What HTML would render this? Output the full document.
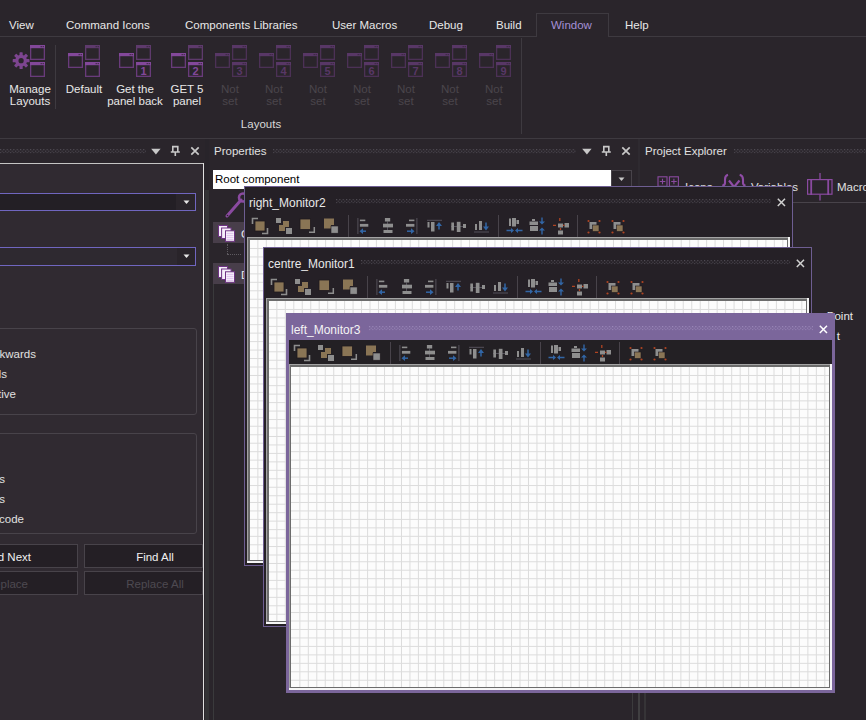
<!DOCTYPE html>
<html><head><meta charset="utf-8"><style>
html,body{margin:0;padding:0;width:866px;height:720px;overflow:hidden;background:#2a252b;}
body{position:relative;font-family:'Liberation Sans', sans-serif;}
.t{position:absolute;white-space:nowrap;font-family:'Liberation Sans', sans-serif;}
</style></head><body>
<div style="position:absolute;left:0px;top:36px;width:866px;height:1px;background:#3e3a40"></div>
<div style="position:absolute;left:536px;top:13px;width:73px;height:24px;border:1px solid #3e3a40;border-bottom:none;background:#2a252b;box-sizing:border-box"></div>
<div class="t" style="left:9px;top:20px;font-size:11.5px;line-height:11.5px;color:#e8e8e8;">View</div>
<div class="t" style="left:66px;top:20px;font-size:11.5px;line-height:11.5px;color:#e8e8e8;">Command Icons</div>
<div class="t" style="left:185px;top:20px;font-size:11.5px;line-height:11.5px;color:#e8e8e8;">Components Libraries</div>
<div class="t" style="left:332px;top:20px;font-size:11.5px;line-height:11.5px;color:#e8e8e8;">User Macros</div>
<div class="t" style="left:429px;top:20px;font-size:11.5px;line-height:11.5px;color:#e8e8e8;">Debug</div>
<div class="t" style="left:496px;top:20px;font-size:11.5px;line-height:11.5px;color:#e8e8e8;">Build</div>
<div class="t" style="left:551px;top:20px;font-size:11.5px;line-height:11.5px;color:#a48fd6;">Window</div>
<div class="t" style="left:625px;top:20px;font-size:11.5px;line-height:11.5px;color:#e8e8e8;">Help</div>
<div style="position:absolute;left:0px;top:138px;width:866px;height:1px;background:#3e3a40"></div>
<div style="position:absolute;left:55px;top:45px;width:1px;height:64px;background:#3e3a40"></div>
<div style="position:absolute;left:521px;top:38px;width:1px;height:96px;background:#3e3a40"></div>
<div class="t" style="left:111px;width:300px;text-align:center;top:119px;font-size:11.5px;line-height:11.5px;color:#d8d8d8;">Layouts</div>
<svg style="position:absolute;left:67.5px;top:53px" width="16" height="16" viewBox="0 0 16 16"><rect x="0.65" y="0.65" width="13.7" height="13.7" fill="none" stroke="#693b7b" stroke-width="1.3"/><rect x="0" y="0" width="15" height="3.2" fill="#83489a"/><rect x="10.6" y="1" width="1.2" height="1.2" fill="#3a2a40"/><rect x="12.6" y="1" width="1.2" height="1.2" fill="#3a2a40"/></svg>
<svg style="position:absolute;left:84.5px;top:45px" width="16" height="16" viewBox="0 0 16 16"><rect x="0.65" y="0.65" width="13.7" height="13.7" fill="none" stroke="#5e3a6c" stroke-width="1.3"/><rect x="0" y="0" width="15" height="3.2" fill="#5e3a6c"/><rect x="10.6" y="1" width="1.2" height="1.2" fill="#3a2a40"/><rect x="12.6" y="1" width="1.2" height="1.2" fill="#3a2a40"/></svg>
<svg style="position:absolute;left:84.5px;top:62px" width="16" height="16" viewBox="0 0 16 16"><rect x="0.65" y="0.65" width="13.7" height="13.7" fill="none" stroke="#693b7b" stroke-width="1.3"/><rect x="0" y="0" width="15" height="3.2" fill="#83489a"/><rect x="10.6" y="1" width="1.2" height="1.2" fill="#3a2a40"/><rect x="12.6" y="1" width="1.2" height="1.2" fill="#3a2a40"/></svg>
<svg style="position:absolute;left:119px;top:53px" width="16" height="16" viewBox="0 0 16 16"><rect x="0.65" y="0.65" width="13.7" height="13.7" fill="none" stroke="#693b7b" stroke-width="1.3"/><rect x="0" y="0" width="15" height="3.2" fill="#83489a"/><rect x="10.6" y="1" width="1.2" height="1.2" fill="#3a2a40"/><rect x="12.6" y="1" width="1.2" height="1.2" fill="#3a2a40"/></svg>
<svg style="position:absolute;left:136px;top:45px" width="16" height="16" viewBox="0 0 16 16"><rect x="0.65" y="0.65" width="13.7" height="13.7" fill="none" stroke="#5e3a6c" stroke-width="1.3"/><rect x="0" y="0" width="15" height="3.2" fill="#5e3a6c"/><rect x="10.6" y="1" width="1.2" height="1.2" fill="#3a2a40"/><rect x="12.6" y="1" width="1.2" height="1.2" fill="#3a2a40"/></svg>
<svg style="position:absolute;left:136px;top:62px" width="16" height="16" viewBox="0 0 16 16"><rect x="0.65" y="0.65" width="13.7" height="13.7" fill="none" stroke="#693b7b" stroke-width="1.3"/><rect x="0" y="0" width="15" height="3.2" fill="#83489a"/><rect x="10.6" y="1" width="1.2" height="1.2" fill="#3a2a40"/><rect x="12.6" y="1" width="1.2" height="1.2" fill="#3a2a40"/><text x="7.6" y="12.6" font-family="Liberation Sans" font-weight="bold" font-size="11" text-anchor="middle" fill="#83489a">1</text></svg>
<svg style="position:absolute;left:171px;top:53px" width="16" height="16" viewBox="0 0 16 16"><rect x="0.65" y="0.65" width="13.7" height="13.7" fill="none" stroke="#693b7b" stroke-width="1.3"/><rect x="0" y="0" width="15" height="3.2" fill="#83489a"/><rect x="10.6" y="1" width="1.2" height="1.2" fill="#3a2a40"/><rect x="12.6" y="1" width="1.2" height="1.2" fill="#3a2a40"/></svg>
<svg style="position:absolute;left:188px;top:45px" width="16" height="16" viewBox="0 0 16 16"><rect x="0.65" y="0.65" width="13.7" height="13.7" fill="none" stroke="#5e3a6c" stroke-width="1.3"/><rect x="0" y="0" width="15" height="3.2" fill="#5e3a6c"/><rect x="10.6" y="1" width="1.2" height="1.2" fill="#3a2a40"/><rect x="12.6" y="1" width="1.2" height="1.2" fill="#3a2a40"/></svg>
<svg style="position:absolute;left:188px;top:62px" width="16" height="16" viewBox="0 0 16 16"><rect x="0.65" y="0.65" width="13.7" height="13.7" fill="none" stroke="#693b7b" stroke-width="1.3"/><rect x="0" y="0" width="15" height="3.2" fill="#83489a"/><rect x="10.6" y="1" width="1.2" height="1.2" fill="#3a2a40"/><rect x="12.6" y="1" width="1.2" height="1.2" fill="#3a2a40"/><text x="7.6" y="12.6" font-family="Liberation Sans" font-weight="bold" font-size="11" text-anchor="middle" fill="#83489a">2</text></svg>
<svg style="position:absolute;left:214.5px;top:53px" width="16" height="16" viewBox="0 0 16 16"><rect x="0.65" y="0.65" width="13.7" height="13.7" fill="none" stroke="#4c3156" stroke-width="1.3"/><rect x="0" y="0" width="15" height="3.2" fill="#583766"/><rect x="10.6" y="1" width="1.2" height="1.2" fill="#3a2a40"/><rect x="12.6" y="1" width="1.2" height="1.2" fill="#3a2a40"/></svg>
<svg style="position:absolute;left:231.5px;top:45px" width="16" height="16" viewBox="0 0 16 16"><rect x="0.65" y="0.65" width="13.7" height="13.7" fill="none" stroke="#4c3156" stroke-width="1.3"/><rect x="0" y="0" width="15" height="3.2" fill="#583766"/><rect x="10.6" y="1" width="1.2" height="1.2" fill="#3a2a40"/><rect x="12.6" y="1" width="1.2" height="1.2" fill="#3a2a40"/></svg>
<svg style="position:absolute;left:231.5px;top:62px" width="16" height="16" viewBox="0 0 16 16"><rect x="0.65" y="0.65" width="13.7" height="13.7" fill="none" stroke="#4c3156" stroke-width="1.3"/><rect x="0" y="0" width="15" height="3.2" fill="#583766"/><rect x="10.6" y="1" width="1.2" height="1.2" fill="#3a2a40"/><rect x="12.6" y="1" width="1.2" height="1.2" fill="#3a2a40"/><text x="7.6" y="12.6" font-family="Liberation Sans" font-weight="bold" font-size="11" text-anchor="middle" fill="#583766">3</text></svg>
<svg style="position:absolute;left:258.5px;top:53px" width="16" height="16" viewBox="0 0 16 16"><rect x="0.65" y="0.65" width="13.7" height="13.7" fill="none" stroke="#4c3156" stroke-width="1.3"/><rect x="0" y="0" width="15" height="3.2" fill="#583766"/><rect x="10.6" y="1" width="1.2" height="1.2" fill="#3a2a40"/><rect x="12.6" y="1" width="1.2" height="1.2" fill="#3a2a40"/></svg>
<svg style="position:absolute;left:275.5px;top:45px" width="16" height="16" viewBox="0 0 16 16"><rect x="0.65" y="0.65" width="13.7" height="13.7" fill="none" stroke="#4c3156" stroke-width="1.3"/><rect x="0" y="0" width="15" height="3.2" fill="#583766"/><rect x="10.6" y="1" width="1.2" height="1.2" fill="#3a2a40"/><rect x="12.6" y="1" width="1.2" height="1.2" fill="#3a2a40"/></svg>
<svg style="position:absolute;left:275.5px;top:62px" width="16" height="16" viewBox="0 0 16 16"><rect x="0.65" y="0.65" width="13.7" height="13.7" fill="none" stroke="#4c3156" stroke-width="1.3"/><rect x="0" y="0" width="15" height="3.2" fill="#583766"/><rect x="10.6" y="1" width="1.2" height="1.2" fill="#3a2a40"/><rect x="12.6" y="1" width="1.2" height="1.2" fill="#3a2a40"/><text x="7.6" y="12.6" font-family="Liberation Sans" font-weight="bold" font-size="11" text-anchor="middle" fill="#583766">4</text></svg>
<svg style="position:absolute;left:302.5px;top:53px" width="16" height="16" viewBox="0 0 16 16"><rect x="0.65" y="0.65" width="13.7" height="13.7" fill="none" stroke="#4c3156" stroke-width="1.3"/><rect x="0" y="0" width="15" height="3.2" fill="#583766"/><rect x="10.6" y="1" width="1.2" height="1.2" fill="#3a2a40"/><rect x="12.6" y="1" width="1.2" height="1.2" fill="#3a2a40"/></svg>
<svg style="position:absolute;left:319.5px;top:45px" width="16" height="16" viewBox="0 0 16 16"><rect x="0.65" y="0.65" width="13.7" height="13.7" fill="none" stroke="#4c3156" stroke-width="1.3"/><rect x="0" y="0" width="15" height="3.2" fill="#583766"/><rect x="10.6" y="1" width="1.2" height="1.2" fill="#3a2a40"/><rect x="12.6" y="1" width="1.2" height="1.2" fill="#3a2a40"/></svg>
<svg style="position:absolute;left:319.5px;top:62px" width="16" height="16" viewBox="0 0 16 16"><rect x="0.65" y="0.65" width="13.7" height="13.7" fill="none" stroke="#4c3156" stroke-width="1.3"/><rect x="0" y="0" width="15" height="3.2" fill="#583766"/><rect x="10.6" y="1" width="1.2" height="1.2" fill="#3a2a40"/><rect x="12.6" y="1" width="1.2" height="1.2" fill="#3a2a40"/><text x="7.6" y="12.6" font-family="Liberation Sans" font-weight="bold" font-size="11" text-anchor="middle" fill="#583766">5</text></svg>
<svg style="position:absolute;left:346.5px;top:53px" width="16" height="16" viewBox="0 0 16 16"><rect x="0.65" y="0.65" width="13.7" height="13.7" fill="none" stroke="#4c3156" stroke-width="1.3"/><rect x="0" y="0" width="15" height="3.2" fill="#583766"/><rect x="10.6" y="1" width="1.2" height="1.2" fill="#3a2a40"/><rect x="12.6" y="1" width="1.2" height="1.2" fill="#3a2a40"/></svg>
<svg style="position:absolute;left:363.5px;top:45px" width="16" height="16" viewBox="0 0 16 16"><rect x="0.65" y="0.65" width="13.7" height="13.7" fill="none" stroke="#4c3156" stroke-width="1.3"/><rect x="0" y="0" width="15" height="3.2" fill="#583766"/><rect x="10.6" y="1" width="1.2" height="1.2" fill="#3a2a40"/><rect x="12.6" y="1" width="1.2" height="1.2" fill="#3a2a40"/></svg>
<svg style="position:absolute;left:363.5px;top:62px" width="16" height="16" viewBox="0 0 16 16"><rect x="0.65" y="0.65" width="13.7" height="13.7" fill="none" stroke="#4c3156" stroke-width="1.3"/><rect x="0" y="0" width="15" height="3.2" fill="#583766"/><rect x="10.6" y="1" width="1.2" height="1.2" fill="#3a2a40"/><rect x="12.6" y="1" width="1.2" height="1.2" fill="#3a2a40"/><text x="7.6" y="12.6" font-family="Liberation Sans" font-weight="bold" font-size="11" text-anchor="middle" fill="#583766">6</text></svg>
<svg style="position:absolute;left:390.5px;top:53px" width="16" height="16" viewBox="0 0 16 16"><rect x="0.65" y="0.65" width="13.7" height="13.7" fill="none" stroke="#4c3156" stroke-width="1.3"/><rect x="0" y="0" width="15" height="3.2" fill="#583766"/><rect x="10.6" y="1" width="1.2" height="1.2" fill="#3a2a40"/><rect x="12.6" y="1" width="1.2" height="1.2" fill="#3a2a40"/></svg>
<svg style="position:absolute;left:407.5px;top:45px" width="16" height="16" viewBox="0 0 16 16"><rect x="0.65" y="0.65" width="13.7" height="13.7" fill="none" stroke="#4c3156" stroke-width="1.3"/><rect x="0" y="0" width="15" height="3.2" fill="#583766"/><rect x="10.6" y="1" width="1.2" height="1.2" fill="#3a2a40"/><rect x="12.6" y="1" width="1.2" height="1.2" fill="#3a2a40"/></svg>
<svg style="position:absolute;left:407.5px;top:62px" width="16" height="16" viewBox="0 0 16 16"><rect x="0.65" y="0.65" width="13.7" height="13.7" fill="none" stroke="#4c3156" stroke-width="1.3"/><rect x="0" y="0" width="15" height="3.2" fill="#583766"/><rect x="10.6" y="1" width="1.2" height="1.2" fill="#3a2a40"/><rect x="12.6" y="1" width="1.2" height="1.2" fill="#3a2a40"/><text x="7.6" y="12.6" font-family="Liberation Sans" font-weight="bold" font-size="11" text-anchor="middle" fill="#583766">7</text></svg>
<svg style="position:absolute;left:434.5px;top:53px" width="16" height="16" viewBox="0 0 16 16"><rect x="0.65" y="0.65" width="13.7" height="13.7" fill="none" stroke="#4c3156" stroke-width="1.3"/><rect x="0" y="0" width="15" height="3.2" fill="#583766"/><rect x="10.6" y="1" width="1.2" height="1.2" fill="#3a2a40"/><rect x="12.6" y="1" width="1.2" height="1.2" fill="#3a2a40"/></svg>
<svg style="position:absolute;left:451.5px;top:45px" width="16" height="16" viewBox="0 0 16 16"><rect x="0.65" y="0.65" width="13.7" height="13.7" fill="none" stroke="#4c3156" stroke-width="1.3"/><rect x="0" y="0" width="15" height="3.2" fill="#583766"/><rect x="10.6" y="1" width="1.2" height="1.2" fill="#3a2a40"/><rect x="12.6" y="1" width="1.2" height="1.2" fill="#3a2a40"/></svg>
<svg style="position:absolute;left:451.5px;top:62px" width="16" height="16" viewBox="0 0 16 16"><rect x="0.65" y="0.65" width="13.7" height="13.7" fill="none" stroke="#4c3156" stroke-width="1.3"/><rect x="0" y="0" width="15" height="3.2" fill="#583766"/><rect x="10.6" y="1" width="1.2" height="1.2" fill="#3a2a40"/><rect x="12.6" y="1" width="1.2" height="1.2" fill="#3a2a40"/><text x="7.6" y="12.6" font-family="Liberation Sans" font-weight="bold" font-size="11" text-anchor="middle" fill="#583766">8</text></svg>
<svg style="position:absolute;left:478.5px;top:53px" width="16" height="16" viewBox="0 0 16 16"><rect x="0.65" y="0.65" width="13.7" height="13.7" fill="none" stroke="#4c3156" stroke-width="1.3"/><rect x="0" y="0" width="15" height="3.2" fill="#583766"/><rect x="10.6" y="1" width="1.2" height="1.2" fill="#3a2a40"/><rect x="12.6" y="1" width="1.2" height="1.2" fill="#3a2a40"/></svg>
<svg style="position:absolute;left:495.5px;top:45px" width="16" height="16" viewBox="0 0 16 16"><rect x="0.65" y="0.65" width="13.7" height="13.7" fill="none" stroke="#4c3156" stroke-width="1.3"/><rect x="0" y="0" width="15" height="3.2" fill="#583766"/><rect x="10.6" y="1" width="1.2" height="1.2" fill="#3a2a40"/><rect x="12.6" y="1" width="1.2" height="1.2" fill="#3a2a40"/></svg>
<svg style="position:absolute;left:495.5px;top:62px" width="16" height="16" viewBox="0 0 16 16"><rect x="0.65" y="0.65" width="13.7" height="13.7" fill="none" stroke="#4c3156" stroke-width="1.3"/><rect x="0" y="0" width="15" height="3.2" fill="#583766"/><rect x="10.6" y="1" width="1.2" height="1.2" fill="#3a2a40"/><rect x="12.6" y="1" width="1.2" height="1.2" fill="#3a2a40"/><text x="7.6" y="12.6" font-family="Liberation Sans" font-weight="bold" font-size="11" text-anchor="middle" fill="#583766">9</text></svg>
<svg style="position:absolute;left:11px;top:51px" width="21" height="21" viewBox="0 0 21 21"><g fill="#7d4590" transform="translate(10.1 9.7)"><rect x="-1.6" y="-8.4" width="3.2" height="4" rx="0.6" transform="rotate(0)"/><rect x="-1.6" y="-8.4" width="3.2" height="4" rx="0.6" transform="rotate(45)"/><rect x="-1.6" y="-8.4" width="3.2" height="4" rx="0.6" transform="rotate(90)"/><rect x="-1.6" y="-8.4" width="3.2" height="4" rx="0.6" transform="rotate(135)"/><rect x="-1.6" y="-8.4" width="3.2" height="4" rx="0.6" transform="rotate(180)"/><rect x="-1.6" y="-8.4" width="3.2" height="4" rx="0.6" transform="rotate(225)"/><rect x="-1.6" y="-8.4" width="3.2" height="4" rx="0.6" transform="rotate(270)"/><rect x="-1.6" y="-8.4" width="3.2" height="4" rx="0.6" transform="rotate(315)"/><circle r="5.9"/></g><circle cx="10.1" cy="9.7" r="2.6" fill="#2a252b"/></svg>
<svg style="position:absolute;left:30.3px;top:45px" width="16" height="16" viewBox="0 0 16 16"><rect x="0.65" y="0.65" width="13.7" height="13.7" fill="none" stroke="#693b7b" stroke-width="1.3"/><rect x="0" y="0" width="15" height="3.2" fill="#83489a"/><rect x="10.6" y="1" width="1.2" height="1.2" fill="#3a2a40"/><rect x="12.6" y="1" width="1.2" height="1.2" fill="#3a2a40"/></svg>
<svg style="position:absolute;left:30.3px;top:62px" width="16" height="16" viewBox="0 0 16 16"><rect x="0.65" y="0.65" width="13.7" height="13.7" fill="none" stroke="#693b7b" stroke-width="1.3"/><rect x="0" y="0" width="15" height="3.2" fill="#83489a"/><rect x="10.6" y="1" width="1.2" height="1.2" fill="#3a2a40"/><rect x="12.6" y="1" width="1.2" height="1.2" fill="#3a2a40"/></svg>
<div class="t" style="left:-120px;width:300px;text-align:center;top:84px;font-size:11.5px;line-height:11.5px;color:#e8e8e8;">Manage</div>
<div class="t" style="left:-120px;width:300px;text-align:center;top:96px;font-size:11.5px;line-height:11.5px;color:#e8e8e8;">Layouts</div>
<div class="t" style="left:-66px;width:300px;text-align:center;top:84px;font-size:11.5px;line-height:11.5px;color:#e8e8e8;">Default</div>
<div class="t" style="left:-15px;width:300px;text-align:center;top:84px;font-size:11.5px;line-height:11.5px;color:#e8e8e8;">Get the</div>
<div class="t" style="left:-15px;width:300px;text-align:center;top:96px;font-size:11.5px;line-height:11.5px;color:#e8e8e8;">panel back</div>
<div class="t" style="left:37px;width:300px;text-align:center;top:84px;font-size:11.5px;line-height:11.5px;color:#e8e8e8;">GET 5</div>
<div class="t" style="left:37px;width:300px;text-align:center;top:96px;font-size:11.5px;line-height:11.5px;color:#e8e8e8;">panel</div>
<div class="t" style="left:80px;width:300px;text-align:center;top:84px;font-size:11.5px;line-height:11.5px;color:#4a464c;">Not</div>
<div class="t" style="left:80px;width:300px;text-align:center;top:96px;font-size:11.5px;line-height:11.5px;color:#4a464c;">set</div>
<div class="t" style="left:124px;width:300px;text-align:center;top:84px;font-size:11.5px;line-height:11.5px;color:#4a464c;">Not</div>
<div class="t" style="left:124px;width:300px;text-align:center;top:96px;font-size:11.5px;line-height:11.5px;color:#4a464c;">set</div>
<div class="t" style="left:168px;width:300px;text-align:center;top:84px;font-size:11.5px;line-height:11.5px;color:#4a464c;">Not</div>
<div class="t" style="left:168px;width:300px;text-align:center;top:96px;font-size:11.5px;line-height:11.5px;color:#4a464c;">set</div>
<div class="t" style="left:212px;width:300px;text-align:center;top:84px;font-size:11.5px;line-height:11.5px;color:#4a464c;">Not</div>
<div class="t" style="left:212px;width:300px;text-align:center;top:96px;font-size:11.5px;line-height:11.5px;color:#4a464c;">set</div>
<div class="t" style="left:256px;width:300px;text-align:center;top:84px;font-size:11.5px;line-height:11.5px;color:#4a464c;">Not</div>
<div class="t" style="left:256px;width:300px;text-align:center;top:96px;font-size:11.5px;line-height:11.5px;color:#4a464c;">set</div>
<div class="t" style="left:300px;width:300px;text-align:center;top:84px;font-size:11.5px;line-height:11.5px;color:#4a464c;">Not</div>
<div class="t" style="left:300px;width:300px;text-align:center;top:96px;font-size:11.5px;line-height:11.5px;color:#4a464c;">set</div>
<div class="t" style="left:344px;width:300px;text-align:center;top:84px;font-size:11.5px;line-height:11.5px;color:#4a464c;">Not</div>
<div class="t" style="left:344px;width:300px;text-align:center;top:96px;font-size:11.5px;line-height:11.5px;color:#4a464c;">set</div>
<svg style="position:absolute;left:0px;top:149px" width="146" height="5"><defs><pattern id="dp0_149" width="3.33" height="3.33" patternUnits="userSpaceOnUse"><rect x="0" y="0" width="1.1" height="1.1" fill="#55515a"/><rect x="1.67" y="1.67" width="1.1" height="1.1" fill="#55515a"/></pattern></defs><rect x="0" y="0" width="146" height="4.2" fill="url(#dp0_149)"/></svg>
<svg style="position:absolute;left:150px;top:145px" width="52" height="13" viewBox="0 0 52 13"><path d="M1.2 3.8 L10.6 3.8 L5.9 9.6 Z" fill="#c8c8c8"/><path d="M22 1.6 H28.6 M22.8 1.6 V7 M27.8 1.6 V7 M20.8 7 H29.8 M25.3 7 V11" stroke="#c8c8c8" stroke-width="1.6" fill="none"/><path d="M41.3 2.3 L48.7 9.6 M48.7 2.3 L41.3 9.6" stroke="#c8c8c8" stroke-width="1.7" fill="none"/></svg>
<div style="position:absolute;left:0px;top:163px;width:204px;height:557px;background:#302a31"></div>
<div style="position:absolute;left:0px;top:163px;width:204px;height:1px;background:#c4c4c4"></div>
<div style="position:absolute;left:203px;top:163px;width:1px;height:557px;background:#e0e0e0"></div>
<div style="position:absolute;left:205px;top:139px;width:4px;height:581px;background:#28242a"></div>
<div style="position:absolute;left:205px;top:190px;width:4px;height:530px;background:#333235"></div>
<div style="position:absolute;left:213px;top:284px;width:1px;height:436px;background:#3a3a3c"></div>
<div style="position:absolute;left:-5px;top:193px;width:201px;height:18px;background:#231f25;border:1px solid #7066c0;box-sizing:border-box"></div>
<div style="position:absolute;left:176px;top:194px;width:19px;height:16px;background:#2a252b"></div>
<div style="position:absolute;left:-5px;top:247px;width:201px;height:19px;background:#2e2930;border:1px solid #7066c0;box-sizing:border-box"></div>
<div style="position:absolute;left:177px;top:248px;width:18px;height:17px;background:#29242a"></div>
<svg style="position:absolute;left:183px;top:200px" width="8" height="5"><path d="M0.5 0.5 H6.5 L3.5 4 Z" fill="#e8e8e8"/></svg>
<svg style="position:absolute;left:183px;top:254px" width="8" height="5"><path d="M0.5 0.5 H6.5 L3.5 4 Z" fill="#e8e8e8"/></svg>
<div style="position:absolute;left:-5px;top:328px;width:202px;height:87px;border:1px solid #48434a;border-radius:3px;box-sizing:border-box"></div>
<div style="position:absolute;left:-5px;top:433px;width:202px;height:101px;border:1px solid #48434a;border-radius:3px;box-sizing:border-box"></div>
<div class="t" style="left:-264px;width:300px;text-align:right;top:349px;font-size:11.5px;line-height:11.5px;color:#e0e0e0;">Backwards</div>
<div class="t" style="left:-293px;width:300px;text-align:right;top:369px;font-size:11.5px;line-height:11.5px;color:#e0e0e0;">Fields</div>
<div class="t" style="left:-284px;width:300px;text-align:right;top:389px;font-size:11.5px;line-height:11.5px;color:#e0e0e0;">sensitive</div>
<div class="t" style="left:-295px;width:300px;text-align:right;top:474px;font-size:11.5px;line-height:11.5px;color:#e0e0e0;">comments</div>
<div class="t" style="left:-295px;width:300px;text-align:right;top:494px;font-size:11.5px;line-height:11.5px;color:#e0e0e0;">strings</div>
<div class="t" style="left:-276px;width:300px;text-align:right;top:514px;font-size:11.5px;line-height:11.5px;color:#e0e0e0;">in code</div>
<div style="position:absolute;left:-5px;top:544px;width:83px;height:24px;background:#241f25;border:1px solid #48434a;box-sizing:border-box"></div>
<div style="position:absolute;left:84px;top:544px;width:119px;height:24px;background:#241f25;border:1px solid #48434a;box-sizing:border-box"></div>
<div style="position:absolute;left:-5px;top:571px;width:83px;height:24px;background:#241f25;border:1px solid #48434a;box-sizing:border-box"></div>
<div style="position:absolute;left:84px;top:571px;width:119px;height:24px;background:#241f25;border:1px solid #48434a;box-sizing:border-box"></div>
<div class="t" style="left:-269px;width:300px;text-align:right;top:552px;font-size:11.5px;line-height:11.5px;color:#f0f0f0;">Find Next</div>
<div class="t" style="left:5px;width:300px;text-align:center;top:552px;font-size:11.5px;line-height:11.5px;color:#f0f0f0;">Find All</div>
<div class="t" style="left:-272px;width:300px;text-align:right;top:579px;font-size:11.5px;line-height:11.5px;color:#4e4a51;">Replace</div>
<div class="t" style="left:5px;width:300px;text-align:center;top:579px;font-size:11.5px;line-height:11.5px;color:#4e4a51;">Replace All</div>
<div style="position:absolute;left:203px;top:163px;width:1px;height:557px;background:#e0e0e0"></div>
<div class="t" style="left:214px;top:146px;font-size:11.5px;line-height:11.5px;color:#e0e0e0;">Properties</div>
<svg style="position:absolute;left:273px;top:149px" width="303" height="5"><defs><pattern id="dp273_149" width="3.33" height="3.33" patternUnits="userSpaceOnUse"><rect x="0" y="0" width="1.1" height="1.1" fill="#55515a"/><rect x="1.67" y="1.67" width="1.1" height="1.1" fill="#55515a"/></pattern></defs><rect x="0" y="0" width="303" height="4.2" fill="url(#dp273_149)"/></svg>
<svg style="position:absolute;left:581px;top:145px" width="52" height="13" viewBox="0 0 52 13"><path d="M1.2 3.8 L10.6 3.8 L5.9 9.6 Z" fill="#c8c8c8"/><path d="M22 1.6 H28.6 M22.8 1.6 V7 M27.8 1.6 V7 M20.8 7 H29.8 M25.3 7 V11" stroke="#c8c8c8" stroke-width="1.6" fill="none"/><path d="M41.3 2.3 L48.7 9.6 M48.7 2.3 L41.3 9.6" stroke="#c8c8c8" stroke-width="1.7" fill="none"/></svg>
<div style="position:absolute;left:213px;top:170px;width:398px;height:19px;background:#ffffff"></div>
<div class="t" style="left:215px;top:174px;font-size:11.5px;line-height:11.5px;color:#000000;">Root component</div>
<div style="position:absolute;left:611px;top:170px;width:21px;height:19px;background:#2a252b;border:1px solid #48434a;box-sizing:border-box"></div>
<svg style="position:absolute;left:618px;top:177px" width="8" height="5"><path d="M0.5 0.5 H6.5 L3.5 4 Z" fill="#c8c8c8"/></svg>
<svg style="position:absolute;left:222px;top:190px" width="24" height="30" viewBox="0 0 24 30"><path d="M5 26 L19 10" stroke="#8a4aa0" stroke-width="3" stroke-linecap="round"/><circle cx="21" cy="7.5" r="4" fill="none" stroke="#8a4aa0" stroke-width="2.6"/><circle cx="5.5" cy="25.5" r="0.8" fill="#2a252b"/></svg>
<div style="position:absolute;left:213px;top:222px;width:40px;height:21px;background:#483e4a"></div>
<div style="position:absolute;left:213px;top:263px;width:40px;height:21px;background:#483e4a"></div>
<svg style="position:absolute;left:217px;top:224px" width="19" height="19" viewBox="0 0 19 19"><rect x="1.5" y="1.5" width="9" height="11" fill="#f6eefa" stroke="#6e3284"/><rect x="4.6" y="4" width="9.5" height="10.5" fill="#f6eefa" stroke="#6e3284"/><rect x="8.5" y="6.8" width="9" height="10.5" fill="#fbf6fd" stroke="#6e3284"/><path d="M9.5 9.3h7M9.5 11.3h7M9.5 13.3h7M9.5 15.3h7" stroke="#dcbceb" stroke-width="1"/></svg>
<div class="t" style="left:241px;top:229px;font-size:11.5px;line-height:11.5px;color:#e8e8e8;">Components</div>
<div class="t" style="left:241px;top:270px;font-size:11.5px;line-height:11.5px;color:#e8e8e8;">Displays</div>
<svg style="position:absolute;left:217px;top:265px" width="19" height="19" viewBox="0 0 19 19"><rect x="1.5" y="1.5" width="9" height="11" fill="#f6eefa" stroke="#6e3284"/><rect x="4.6" y="4" width="9.5" height="10.5" fill="#f6eefa" stroke="#6e3284"/><rect x="8.5" y="6.8" width="9" height="10.5" fill="#fbf6fd" stroke="#6e3284"/><path d="M9.5 9.3h7M9.5 11.3h7M9.5 13.3h7M9.5 15.3h7" stroke="#dcbceb" stroke-width="1"/></svg>
<div style="position:absolute;left:227px;top:244px;width:1px;height:10px;border-left:1px dotted #5e5a60"></div>
<div style="position:absolute;left:227px;top:254px;width:14px;height:1px;border-top:1px dotted #5e5a60"></div>
<div class="t" style="left:645px;top:146px;font-size:11.5px;line-height:11.5px;color:#e0e0e0;">Project Explorer</div>
<svg style="position:absolute;left:734px;top:149px" width="132" height="5"><defs><pattern id="dp734_149" width="3.33" height="3.33" patternUnits="userSpaceOnUse"><rect x="0" y="0" width="1.1" height="1.1" fill="#55515a"/><rect x="1.67" y="1.67" width="1.1" height="1.1" fill="#55515a"/></pattern></defs><rect x="0" y="0" width="132" height="4.2" fill="url(#dp734_149)"/></svg>
<div style="position:absolute;left:792px;top:202px;width:74px;height:1px;background:#48434a"></div>
<div class="t" style="left:685px;top:182px;font-size:11.5px;line-height:11.5px;color:#e0e0e0;">Icons</div>
<div class="t" style="left:751px;top:182px;font-size:11.5px;line-height:11.5px;color:#e0e0e0;">Variables</div>
<div class="t" style="left:837px;top:182px;font-size:11.5px;line-height:11.5px;color:#e0e0e0;">Macros</div>
<svg style="position:absolute;left:656px;top:175px" width="24" height="13"><g fill="none" stroke="#8a4aa0" stroke-width="1.1"><rect x="2" y="1.8" width="9" height="9.5"/><rect x="13.4" y="1.8" width="9" height="9.5"/><path d="M6.5 3.8v5.5M3.8 6.5h5.5M17.9 3.8v5.5M15.2 6.5h5.5"/></g></svg>
<svg style="position:absolute;left:720px;top:172px" width="28" height="20"><g fill="none" stroke="#8f4ca6" stroke-width="2.1"><path d="M8 2.8 C5.5 3.5 5 5 5 7.5 V11 C5 12.5 4 13.3 2.3 13.7"/><path d="M9 8.5 L14 15 L19.5 8.5"/><path d="M19.7 2.8 C22.2 3.5 23 5 23 7.5 V11 C23 12.5 24 13.3 25.5 13.7"/></g></svg>
<svg style="position:absolute;left:806px;top:172px" width="28" height="30"><g stroke="#8a4aa0" fill="none"><rect x="1.6" y="7.6" width="24.4" height="14.6" stroke-width="1.2"/><path d="M5.2 7v16M22.2 7v16" stroke-width="1.8"/><path d="M14 1v6.5M14 22.5v6" stroke-width="1.3"/></g></svg>
<div class="t" style="left:553px;width:300px;text-align:right;top:311px;font-size:11.5px;line-height:11.5px;color:#e8e8e8;">Point</div>
<div class="t" style="left:540px;width:300px;text-align:right;top:331px;font-size:11.5px;line-height:11.5px;color:#e8e8e8;">t</div>
<div style="position:absolute;left:638px;top:139px;width:2px;height:51px;background:#2e2a30"></div>
<div style="position:absolute;left:632px;top:284px;width:1px;height:436px;background:#3c3b3d"></div>
<div style="position:absolute;left:638px;top:190px;width:2px;height:530px;background:#403f41"></div>
<div style="position:absolute;left:644px;top:190px;width:2px;height:530px;background:#363437"></div>
<div style="position:absolute;left:244px;top:186px;width:549px;height:380px;background:#252026;border:1px solid #6e5e92;box-sizing:border-box"></div>
<div class="t" style="left:249px;top:197px;font-size:12px;line-height:12px;color:#e8e8e8;">right_Monitor2</div>
<svg style="position:absolute;left:336px;top:199px" width="435" height="5"><defs><pattern id="dp336_199" width="3.33" height="3.33" patternUnits="userSpaceOnUse"><rect x="0" y="0" width="1.1" height="1.1" fill="#55515a"/><rect x="1.67" y="1.67" width="1.1" height="1.1" fill="#55515a"/></pattern></defs><rect x="0" y="0" width="435" height="4.2" fill="url(#dp336_199)"/></svg>
<svg style="position:absolute;left:776px;top:197px" width="11" height="11"><path d="M1.8 1.8 L9 9 M9 1.8 L1.8 9" stroke="#d0d0d0" stroke-width="1.5"/></svg>
<svg style="position:absolute;left:251px;top:217px" width="18" height="18" viewBox="0 0 18 18"><path d="M1.5 7 V1.5 H7" stroke="#8e8e8e" stroke-width="1.6" fill="none"/><rect x="4" y="4" width="10" height="10" fill="#8a7555" stroke="#1e1a1e" stroke-width="0.8"/><path d="M16.5 11 V16.5 H11" stroke="#8e8e8e" stroke-width="1.6" fill="none"/></svg><svg style="position:absolute;left:275px;top:217px" width="18" height="18" viewBox="0 0 18 18"><rect x="1" y="1" width="5" height="5" fill="#8e8e8e"/><rect x="8" y="4" width="6" height="6" fill="#8a7555"/><rect x="4" y="8" width="6" height="6" fill="#8a7555"/><rect x="11" y="11" width="6" height="6" fill="#8e8e8e"/></svg><svg style="position:absolute;left:299px;top:217px" width="18" height="18" viewBox="0 0 18 18"><rect x="1" y="2" width="10.5" height="10.5" fill="#8a7555" stroke="#1e1a1e" stroke-width="0.8"/><path d="M15.3 10 V15.3 H10" stroke="#8e8e8e" stroke-width="1.5" fill="none"/></svg><svg style="position:absolute;left:323px;top:217px" width="18" height="18" viewBox="0 0 18 18"><path d="M1 1.5 H11 V8 H8 V11.5 H1 Z" fill="#8a7555"/><rect x="8" y="9" width="7.2" height="7.2" fill="#8e8e8e" stroke="#1e1a1e" stroke-width="0.6"/></svg><div style="position:absolute;left:348px;top:215px;width:1px;height:22px;background:#48434a"></div><svg style="position:absolute;left:356px;top:217px" width="18" height="18" viewBox="0 0 18 18"><path d="M1.9 1 V17" stroke="#54515a" stroke-width="1"/><rect x="3.9" y="2.6" width="5.4" height="1.6" fill="#8e8e8e"/><rect x="3.9" y="6.9" width="8.4" height="2.8" fill="#8e8e8e"/><path d="M3.5 14.2 L7 11.3 L7 17 Z" fill="#3266a6"/><path d="M6 14.2 H10" stroke="#3266a6" stroke-width="1.5"/></svg><svg style="position:absolute;left:381px;top:217px" width="18" height="18" viewBox="0 0 18 18"><path d="M6.5 4.5 V13" stroke="#54515a" stroke-width="1"/><rect x="3.9" y="1" width="5.3" height="3.5" fill="#8e8e8e"/><rect x="2" y="6.7" width="10" height="3.7" fill="#8e8e8e"/><rect x="2.5" y="13" width="9" height="3" fill="#8e8e8e"/></svg><svg style="position:absolute;left:404px;top:217px" width="18" height="18" viewBox="0 0 18 18"><path d="M12.9 1 V17" stroke="#54515a" stroke-width="1"/><rect x="5" y="2.6" width="5.4" height="1.6" fill="#8e8e8e"/><rect x="2" y="6.9" width="8.4" height="2.8" fill="#8e8e8e"/><path d="M10.5 14.2 L7 11.3 L7 17 Z" fill="#3266a6"/><path d="M3 14.2 H8" stroke="#3266a6" stroke-width="1.5"/></svg><svg style="position:absolute;left:427px;top:217px" width="18" height="18" viewBox="0 0 18 18"><path d="M0 3.3 H15" stroke="#54515a" stroke-width="1"/><rect x="0.5" y="5" width="2" height="5.5" fill="#8e8e8e"/><rect x="4" y="5" width="3.5" height="9.5" fill="#8e8e8e"/><path d="M9 9 L12 5 L15 9 Z" fill="#3266a6"/><path d="M12 8 V12.5" stroke="#3266a6" stroke-width="1.5"/></svg><svg style="position:absolute;left:450px;top:217px" width="18" height="18" viewBox="0 0 18 18"><path d="M1 9.5 H16" stroke="#54515a" stroke-width="1"/><rect x="1.3" y="5.5" width="2.7" height="8" fill="#8e8e8e"/><rect x="6.8" y="4.8" width="3.7" height="10.2" fill="#8e8e8e"/><rect x="13" y="7" width="3" height="4" fill="#8e8e8e"/></svg><svg style="position:absolute;left:473px;top:217px" width="18" height="18" viewBox="0 0 18 18"><path d="M1 15 H16" stroke="#54515a" stroke-width="1"/><rect x="2" y="7" width="2" height="6" fill="#8e8e8e"/><rect x="6" y="4" width="3" height="9" fill="#8e8e8e"/><path d="M13 5.5 V10" stroke="#3266a6" stroke-width="1.5"/><path d="M10 9.5 L13 13.5 L16 9.5 Z" fill="#3266a6"/></svg><div style="position:absolute;left:498px;top:215px;width:1px;height:22px;background:#48434a"></div><svg style="position:absolute;left:506px;top:217px" width="18" height="18" viewBox="0 0 18 18"><rect x="3" y="1.5" width="2" height="7.5" fill="#8e8e8e"/><rect x="6" y="1" width="4" height="8.5" fill="#8e8e8e"/><rect x="10.5" y="3" width="2.5" height="4" fill="#8e8e8e"/><path d="M0.5 13.5 H5.5 M16.5 13.5 H11.5" stroke="#3266a6" stroke-width="1.4"/><path d="M5 11 L8 13.5 L5 16 Z M12 11 L9 13.5 L12 16 Z" fill="#3266a6"/></svg><svg style="position:absolute;left:529px;top:217px" width="18" height="18" viewBox="0 0 18 18"><rect x="3" y="2" width="3" height="2" fill="#8e8e8e"/><rect x="0.5" y="4.5" width="8.5" height="3.5" fill="#8e8e8e"/><rect x="1" y="9" width="8" height="5" fill="#8e8e8e"/><path d="M13 0.5 V5 M13 17.5 V13" stroke="#3266a6" stroke-width="1.4"/><path d="M10 4.5 L13 7.5 L16 4.5 Z M10 13.5 L13 10.5 L16 13.5 Z" fill="#3266a6"/></svg><svg style="position:absolute;left:552px;top:217px" width="18" height="18" viewBox="0 0 18 18"><rect x="6" y="6.5" width="5" height="4" fill="#8e8e8e"/><rect x="12.5" y="6" width="4.5" height="4.5" fill="#8e8e8e"/><rect x="6" y="13.5" width="5" height="4" fill="#8e8e8e"/><path d="M7.8 1 V4 M1 8.3 H4 M11 8.3 H12.5 M8.5 11 V13" stroke="#b04422" stroke-width="1.3"/></svg><div style="position:absolute;left:577px;top:215px;width:1px;height:22px;background:#48434a"></div><svg style="position:absolute;left:585px;top:217px" width="18" height="18" viewBox="0 0 18 18"><rect x="4.5" y="5" width="7" height="7" fill="#8e8e8e"/><rect x="7.5" y="8" width="6.5" height="6.5" fill="#8a7555" stroke="#1e1a1e" stroke-width="0.6"/><circle cx="3.5" cy="4" r="1.1" fill="#b04422"/><circle cx="14.5" cy="4" r="1.1" fill="#b04422"/><circle cx="3.5" cy="15.5" r="1.1" fill="#b04422"/><circle cx="14.5" cy="15.5" r="1.1" fill="#b04422"/></svg><svg style="position:absolute;left:609px;top:217px" width="18" height="18" viewBox="0 0 18 18"><rect x="4.5" y="5" width="7" height="7" fill="#8e8e8e"/><rect x="7.5" y="8" width="6.5" height="6.5" fill="#8a7555" stroke="#1e1a1e" stroke-width="0.6"/><circle cx="3.5" cy="4" r="1.1" fill="#b04422"/><circle cx="14.5" cy="4" r="1.1" fill="#b04422"/><circle cx="3.5" cy="15.5" r="1.1" fill="#b04422"/><circle cx="14.5" cy="15.5" r="1.1" fill="#b04422"/></svg>
<div style="position:absolute;left:247px;top:237px;width:543px;height:326px;background:#f6f6f6"></div>
<div style="position:absolute;left:247px;top:237px;width:541px;height:324px;background:#6c6c6c;border-top:1px solid #a4a4a4;border-left:1px solid #a4a4a4;box-sizing:border-box"></div>
<div style="position:absolute;left:249px;top:240px;width:538px;height:320px;background:#fcfcfc"></div>
<svg style="position:absolute;left:249px;top:240px;background:#fcfcfc" width="538" height="320"><path d="M8.87 0V320M17.33 0V320M25.80 0V320M34.27 0V320M42.73 0V320M51.20 0V320M59.67 0V320M68.14 0V320M76.60 0V320M85.07 0V320M93.54 0V320M102.00 0V320M110.47 0V320M118.94 0V320M127.41 0V320M135.87 0V320M144.34 0V320M152.81 0V320M161.27 0V320M169.74 0V320M178.21 0V320M186.67 0V320M195.14 0V320M203.61 0V320M212.08 0V320M220.54 0V320M229.01 0V320M237.48 0V320M245.94 0V320M254.41 0V320M262.88 0V320M271.34 0V320M279.81 0V320M288.28 0V320M296.75 0V320M305.21 0V320M313.68 0V320M322.15 0V320M330.61 0V320M339.08 0V320M347.55 0V320M356.01 0V320M364.48 0V320M372.95 0V320M381.42 0V320M389.88 0V320M398.35 0V320M406.82 0V320M415.28 0V320M423.75 0V320M432.22 0V320M440.68 0V320M449.15 0V320M457.62 0V320M466.08 0V320M474.55 0V320M483.02 0V320M491.49 0V320M499.95 0V320M508.42 0V320M516.89 0V320M525.35 0V320M533.82 0V320M0 8.47H538M0 16.93H538M0 25.40H538M0 33.87H538M0 42.34H538M0 50.80H538M0 59.27H538M0 67.74H538M0 76.20H538M0 84.67H538M0 93.14H538M0 101.60H538M0 110.07H538M0 118.54H538M0 127.01H538M0 135.47H538M0 143.94H538M0 152.41H538M0 160.87H538M0 169.34H538M0 177.81H538M0 186.27H538M0 194.74H538M0 203.21H538M0 211.68H538M0 220.14H538M0 228.61H538M0 237.08H538M0 245.54H538M0 254.01H538M0 262.48H538M0 270.94H538M0 279.41H538M0 287.88H538M0 296.35H538M0 304.81H538M0 313.28H538" stroke="#dcdcdc" stroke-width="1" fill="none"/></svg>
<div style="position:absolute;left:249px;top:240px;width:1px;height:320px;background:#6c6c6c"></div>
<div style="position:absolute;left:263px;top:247px;width:549px;height:380px;background:#252026;border:1px solid #6e5e92;box-sizing:border-box"></div>
<div class="t" style="left:268px;top:258px;font-size:12px;line-height:12px;color:#e8e8e8;">centre_Monitor1</div>
<svg style="position:absolute;left:361px;top:260px" width="429" height="5"><defs><pattern id="dp361_260" width="3.33" height="3.33" patternUnits="userSpaceOnUse"><rect x="0" y="0" width="1.1" height="1.1" fill="#55515a"/><rect x="1.67" y="1.67" width="1.1" height="1.1" fill="#55515a"/></pattern></defs><rect x="0" y="0" width="429" height="4.2" fill="url(#dp361_260)"/></svg>
<svg style="position:absolute;left:795px;top:258px" width="11" height="11"><path d="M1.8 1.8 L9 9 M9 1.8 L1.8 9" stroke="#d0d0d0" stroke-width="1.5"/></svg>
<svg style="position:absolute;left:270px;top:278px" width="18" height="18" viewBox="0 0 18 18"><path d="M1.5 7 V1.5 H7" stroke="#8e8e8e" stroke-width="1.6" fill="none"/><rect x="4" y="4" width="10" height="10" fill="#8a7555" stroke="#1e1a1e" stroke-width="0.8"/><path d="M16.5 11 V16.5 H11" stroke="#8e8e8e" stroke-width="1.6" fill="none"/></svg><svg style="position:absolute;left:294px;top:278px" width="18" height="18" viewBox="0 0 18 18"><rect x="1" y="1" width="5" height="5" fill="#8e8e8e"/><rect x="8" y="4" width="6" height="6" fill="#8a7555"/><rect x="4" y="8" width="6" height="6" fill="#8a7555"/><rect x="11" y="11" width="6" height="6" fill="#8e8e8e"/></svg><svg style="position:absolute;left:318px;top:278px" width="18" height="18" viewBox="0 0 18 18"><rect x="1" y="2" width="10.5" height="10.5" fill="#8a7555" stroke="#1e1a1e" stroke-width="0.8"/><path d="M15.3 10 V15.3 H10" stroke="#8e8e8e" stroke-width="1.5" fill="none"/></svg><svg style="position:absolute;left:342px;top:278px" width="18" height="18" viewBox="0 0 18 18"><path d="M1 1.5 H11 V8 H8 V11.5 H1 Z" fill="#8a7555"/><rect x="8" y="9" width="7.2" height="7.2" fill="#8e8e8e" stroke="#1e1a1e" stroke-width="0.6"/></svg><div style="position:absolute;left:367px;top:276px;width:1px;height:22px;background:#48434a"></div><svg style="position:absolute;left:375px;top:278px" width="18" height="18" viewBox="0 0 18 18"><path d="M1.9 1 V17" stroke="#54515a" stroke-width="1"/><rect x="3.9" y="2.6" width="5.4" height="1.6" fill="#8e8e8e"/><rect x="3.9" y="6.9" width="8.4" height="2.8" fill="#8e8e8e"/><path d="M3.5 14.2 L7 11.3 L7 17 Z" fill="#3266a6"/><path d="M6 14.2 H10" stroke="#3266a6" stroke-width="1.5"/></svg><svg style="position:absolute;left:400px;top:278px" width="18" height="18" viewBox="0 0 18 18"><path d="M6.5 4.5 V13" stroke="#54515a" stroke-width="1"/><rect x="3.9" y="1" width="5.3" height="3.5" fill="#8e8e8e"/><rect x="2" y="6.7" width="10" height="3.7" fill="#8e8e8e"/><rect x="2.5" y="13" width="9" height="3" fill="#8e8e8e"/></svg><svg style="position:absolute;left:423px;top:278px" width="18" height="18" viewBox="0 0 18 18"><path d="M12.9 1 V17" stroke="#54515a" stroke-width="1"/><rect x="5" y="2.6" width="5.4" height="1.6" fill="#8e8e8e"/><rect x="2" y="6.9" width="8.4" height="2.8" fill="#8e8e8e"/><path d="M10.5 14.2 L7 11.3 L7 17 Z" fill="#3266a6"/><path d="M3 14.2 H8" stroke="#3266a6" stroke-width="1.5"/></svg><svg style="position:absolute;left:446px;top:278px" width="18" height="18" viewBox="0 0 18 18"><path d="M0 3.3 H15" stroke="#54515a" stroke-width="1"/><rect x="0.5" y="5" width="2" height="5.5" fill="#8e8e8e"/><rect x="4" y="5" width="3.5" height="9.5" fill="#8e8e8e"/><path d="M9 9 L12 5 L15 9 Z" fill="#3266a6"/><path d="M12 8 V12.5" stroke="#3266a6" stroke-width="1.5"/></svg><svg style="position:absolute;left:469px;top:278px" width="18" height="18" viewBox="0 0 18 18"><path d="M1 9.5 H16" stroke="#54515a" stroke-width="1"/><rect x="1.3" y="5.5" width="2.7" height="8" fill="#8e8e8e"/><rect x="6.8" y="4.8" width="3.7" height="10.2" fill="#8e8e8e"/><rect x="13" y="7" width="3" height="4" fill="#8e8e8e"/></svg><svg style="position:absolute;left:492px;top:278px" width="18" height="18" viewBox="0 0 18 18"><path d="M1 15 H16" stroke="#54515a" stroke-width="1"/><rect x="2" y="7" width="2" height="6" fill="#8e8e8e"/><rect x="6" y="4" width="3" height="9" fill="#8e8e8e"/><path d="M13 5.5 V10" stroke="#3266a6" stroke-width="1.5"/><path d="M10 9.5 L13 13.5 L16 9.5 Z" fill="#3266a6"/></svg><div style="position:absolute;left:517px;top:276px;width:1px;height:22px;background:#48434a"></div><svg style="position:absolute;left:525px;top:278px" width="18" height="18" viewBox="0 0 18 18"><rect x="3" y="1.5" width="2" height="7.5" fill="#8e8e8e"/><rect x="6" y="1" width="4" height="8.5" fill="#8e8e8e"/><rect x="10.5" y="3" width="2.5" height="4" fill="#8e8e8e"/><path d="M0.5 13.5 H5.5 M16.5 13.5 H11.5" stroke="#3266a6" stroke-width="1.4"/><path d="M5 11 L8 13.5 L5 16 Z M12 11 L9 13.5 L12 16 Z" fill="#3266a6"/></svg><svg style="position:absolute;left:548px;top:278px" width="18" height="18" viewBox="0 0 18 18"><rect x="3" y="2" width="3" height="2" fill="#8e8e8e"/><rect x="0.5" y="4.5" width="8.5" height="3.5" fill="#8e8e8e"/><rect x="1" y="9" width="8" height="5" fill="#8e8e8e"/><path d="M13 0.5 V5 M13 17.5 V13" stroke="#3266a6" stroke-width="1.4"/><path d="M10 4.5 L13 7.5 L16 4.5 Z M10 13.5 L13 10.5 L16 13.5 Z" fill="#3266a6"/></svg><svg style="position:absolute;left:571px;top:278px" width="18" height="18" viewBox="0 0 18 18"><rect x="6" y="6.5" width="5" height="4" fill="#8e8e8e"/><rect x="12.5" y="6" width="4.5" height="4.5" fill="#8e8e8e"/><rect x="6" y="13.5" width="5" height="4" fill="#8e8e8e"/><path d="M7.8 1 V4 M1 8.3 H4 M11 8.3 H12.5 M8.5 11 V13" stroke="#b04422" stroke-width="1.3"/></svg><div style="position:absolute;left:596px;top:276px;width:1px;height:22px;background:#48434a"></div><svg style="position:absolute;left:604px;top:278px" width="18" height="18" viewBox="0 0 18 18"><rect x="4.5" y="5" width="7" height="7" fill="#8e8e8e"/><rect x="7.5" y="8" width="6.5" height="6.5" fill="#8a7555" stroke="#1e1a1e" stroke-width="0.6"/><circle cx="3.5" cy="4" r="1.1" fill="#b04422"/><circle cx="14.5" cy="4" r="1.1" fill="#b04422"/><circle cx="3.5" cy="15.5" r="1.1" fill="#b04422"/><circle cx="14.5" cy="15.5" r="1.1" fill="#b04422"/></svg><svg style="position:absolute;left:628px;top:278px" width="18" height="18" viewBox="0 0 18 18"><rect x="4.5" y="5" width="7" height="7" fill="#8e8e8e"/><rect x="7.5" y="8" width="6.5" height="6.5" fill="#8a7555" stroke="#1e1a1e" stroke-width="0.6"/><circle cx="3.5" cy="4" r="1.1" fill="#b04422"/><circle cx="14.5" cy="4" r="1.1" fill="#b04422"/><circle cx="3.5" cy="15.5" r="1.1" fill="#b04422"/><circle cx="14.5" cy="15.5" r="1.1" fill="#b04422"/></svg>
<div style="position:absolute;left:266px;top:298px;width:543px;height:326px;background:#f6f6f6"></div>
<div style="position:absolute;left:266px;top:298px;width:541px;height:324px;background:#6c6c6c;border-top:1px solid #a4a4a4;border-left:1px solid #a4a4a4;box-sizing:border-box"></div>
<div style="position:absolute;left:268px;top:301px;width:538px;height:320px;background:#fcfcfc"></div>
<svg style="position:absolute;left:268px;top:301px;background:#fcfcfc" width="538" height="320"><path d="M8.87 0V320M17.33 0V320M25.80 0V320M34.27 0V320M42.73 0V320M51.20 0V320M59.67 0V320M68.14 0V320M76.60 0V320M85.07 0V320M93.54 0V320M102.00 0V320M110.47 0V320M118.94 0V320M127.41 0V320M135.87 0V320M144.34 0V320M152.81 0V320M161.27 0V320M169.74 0V320M178.21 0V320M186.67 0V320M195.14 0V320M203.61 0V320M212.08 0V320M220.54 0V320M229.01 0V320M237.48 0V320M245.94 0V320M254.41 0V320M262.88 0V320M271.34 0V320M279.81 0V320M288.28 0V320M296.75 0V320M305.21 0V320M313.68 0V320M322.15 0V320M330.61 0V320M339.08 0V320M347.55 0V320M356.01 0V320M364.48 0V320M372.95 0V320M381.42 0V320M389.88 0V320M398.35 0V320M406.82 0V320M415.28 0V320M423.75 0V320M432.22 0V320M440.68 0V320M449.15 0V320M457.62 0V320M466.08 0V320M474.55 0V320M483.02 0V320M491.49 0V320M499.95 0V320M508.42 0V320M516.89 0V320M525.35 0V320M533.82 0V320M0 8.47H538M0 16.93H538M0 25.40H538M0 33.87H538M0 42.34H538M0 50.80H538M0 59.27H538M0 67.74H538M0 76.20H538M0 84.67H538M0 93.14H538M0 101.60H538M0 110.07H538M0 118.54H538M0 127.01H538M0 135.47H538M0 143.94H538M0 152.41H538M0 160.87H538M0 169.34H538M0 177.81H538M0 186.27H538M0 194.74H538M0 203.21H538M0 211.68H538M0 220.14H538M0 228.61H538M0 237.08H538M0 245.54H538M0 254.01H538M0 262.48H538M0 270.94H538M0 279.41H538M0 287.88H538M0 296.35H538M0 304.81H538M0 313.28H538" stroke="#dcdcdc" stroke-width="1" fill="none"/></svg>
<div style="position:absolute;left:268px;top:301px;width:1px;height:320px;background:#6c6c6c"></div>
<div style="position:absolute;left:286px;top:313px;width:549px;height:380px;background:#232024;border:3px solid #7b669b;box-sizing:border-box"></div>
<div style="position:absolute;left:286px;top:313px;width:549px;height:27px;background:#7b669b"></div>
<div class="t" style="left:291px;top:324px;font-size:12px;line-height:12px;color:#f4f4f4;">left_Monitor3</div>
<svg style="position:absolute;left:369px;top:326px" width="444" height="5"><defs><pattern id="dp369_326" width="3.33" height="3.33" patternUnits="userSpaceOnUse"><rect x="0" y="0" width="1.1" height="1.1" fill="#9e8cbc"/><rect x="1.67" y="1.67" width="1.1" height="1.1" fill="#9e8cbc"/></pattern></defs><rect x="0" y="0" width="444" height="4.2" fill="url(#dp369_326)"/></svg>
<svg style="position:absolute;left:818px;top:324px" width="11" height="11"><path d="M1.8 1.8 L9 9 M9 1.8 L1.8 9" stroke="#ffffff" stroke-width="1.5"/></svg>
<svg style="position:absolute;left:293px;top:344px" width="18" height="18" viewBox="0 0 18 18"><path d="M1.5 7 V1.5 H7" stroke="#8e8e8e" stroke-width="1.6" fill="none"/><rect x="4" y="4" width="10" height="10" fill="#8a7555" stroke="#1e1a1e" stroke-width="0.8"/><path d="M16.5 11 V16.5 H11" stroke="#8e8e8e" stroke-width="1.6" fill="none"/></svg><svg style="position:absolute;left:317px;top:344px" width="18" height="18" viewBox="0 0 18 18"><rect x="1" y="1" width="5" height="5" fill="#8e8e8e"/><rect x="8" y="4" width="6" height="6" fill="#8a7555"/><rect x="4" y="8" width="6" height="6" fill="#8a7555"/><rect x="11" y="11" width="6" height="6" fill="#8e8e8e"/></svg><svg style="position:absolute;left:341px;top:344px" width="18" height="18" viewBox="0 0 18 18"><rect x="1" y="2" width="10.5" height="10.5" fill="#8a7555" stroke="#1e1a1e" stroke-width="0.8"/><path d="M15.3 10 V15.3 H10" stroke="#8e8e8e" stroke-width="1.5" fill="none"/></svg><svg style="position:absolute;left:365px;top:344px" width="18" height="18" viewBox="0 0 18 18"><path d="M1 1.5 H11 V8 H8 V11.5 H1 Z" fill="#8a7555"/><rect x="8" y="9" width="7.2" height="7.2" fill="#8e8e8e" stroke="#1e1a1e" stroke-width="0.6"/></svg><div style="position:absolute;left:390px;top:342px;width:1px;height:22px;background:#48434a"></div><svg style="position:absolute;left:398px;top:344px" width="18" height="18" viewBox="0 0 18 18"><path d="M1.9 1 V17" stroke="#54515a" stroke-width="1"/><rect x="3.9" y="2.6" width="5.4" height="1.6" fill="#8e8e8e"/><rect x="3.9" y="6.9" width="8.4" height="2.8" fill="#8e8e8e"/><path d="M3.5 14.2 L7 11.3 L7 17 Z" fill="#3266a6"/><path d="M6 14.2 H10" stroke="#3266a6" stroke-width="1.5"/></svg><svg style="position:absolute;left:423px;top:344px" width="18" height="18" viewBox="0 0 18 18"><path d="M6.5 4.5 V13" stroke="#54515a" stroke-width="1"/><rect x="3.9" y="1" width="5.3" height="3.5" fill="#8e8e8e"/><rect x="2" y="6.7" width="10" height="3.7" fill="#8e8e8e"/><rect x="2.5" y="13" width="9" height="3" fill="#8e8e8e"/></svg><svg style="position:absolute;left:446px;top:344px" width="18" height="18" viewBox="0 0 18 18"><path d="M12.9 1 V17" stroke="#54515a" stroke-width="1"/><rect x="5" y="2.6" width="5.4" height="1.6" fill="#8e8e8e"/><rect x="2" y="6.9" width="8.4" height="2.8" fill="#8e8e8e"/><path d="M10.5 14.2 L7 11.3 L7 17 Z" fill="#3266a6"/><path d="M3 14.2 H8" stroke="#3266a6" stroke-width="1.5"/></svg><svg style="position:absolute;left:469px;top:344px" width="18" height="18" viewBox="0 0 18 18"><path d="M0 3.3 H15" stroke="#54515a" stroke-width="1"/><rect x="0.5" y="5" width="2" height="5.5" fill="#8e8e8e"/><rect x="4" y="5" width="3.5" height="9.5" fill="#8e8e8e"/><path d="M9 9 L12 5 L15 9 Z" fill="#3266a6"/><path d="M12 8 V12.5" stroke="#3266a6" stroke-width="1.5"/></svg><svg style="position:absolute;left:492px;top:344px" width="18" height="18" viewBox="0 0 18 18"><path d="M1 9.5 H16" stroke="#54515a" stroke-width="1"/><rect x="1.3" y="5.5" width="2.7" height="8" fill="#8e8e8e"/><rect x="6.8" y="4.8" width="3.7" height="10.2" fill="#8e8e8e"/><rect x="13" y="7" width="3" height="4" fill="#8e8e8e"/></svg><svg style="position:absolute;left:515px;top:344px" width="18" height="18" viewBox="0 0 18 18"><path d="M1 15 H16" stroke="#54515a" stroke-width="1"/><rect x="2" y="7" width="2" height="6" fill="#8e8e8e"/><rect x="6" y="4" width="3" height="9" fill="#8e8e8e"/><path d="M13 5.5 V10" stroke="#3266a6" stroke-width="1.5"/><path d="M10 9.5 L13 13.5 L16 9.5 Z" fill="#3266a6"/></svg><div style="position:absolute;left:540px;top:342px;width:1px;height:22px;background:#48434a"></div><svg style="position:absolute;left:548px;top:344px" width="18" height="18" viewBox="0 0 18 18"><rect x="3" y="1.5" width="2" height="7.5" fill="#8e8e8e"/><rect x="6" y="1" width="4" height="8.5" fill="#8e8e8e"/><rect x="10.5" y="3" width="2.5" height="4" fill="#8e8e8e"/><path d="M0.5 13.5 H5.5 M16.5 13.5 H11.5" stroke="#3266a6" stroke-width="1.4"/><path d="M5 11 L8 13.5 L5 16 Z M12 11 L9 13.5 L12 16 Z" fill="#3266a6"/></svg><svg style="position:absolute;left:571px;top:344px" width="18" height="18" viewBox="0 0 18 18"><rect x="3" y="2" width="3" height="2" fill="#8e8e8e"/><rect x="0.5" y="4.5" width="8.5" height="3.5" fill="#8e8e8e"/><rect x="1" y="9" width="8" height="5" fill="#8e8e8e"/><path d="M13 0.5 V5 M13 17.5 V13" stroke="#3266a6" stroke-width="1.4"/><path d="M10 4.5 L13 7.5 L16 4.5 Z M10 13.5 L13 10.5 L16 13.5 Z" fill="#3266a6"/></svg><svg style="position:absolute;left:594px;top:344px" width="18" height="18" viewBox="0 0 18 18"><rect x="6" y="6.5" width="5" height="4" fill="#8e8e8e"/><rect x="12.5" y="6" width="4.5" height="4.5" fill="#8e8e8e"/><rect x="6" y="13.5" width="5" height="4" fill="#8e8e8e"/><path d="M7.8 1 V4 M1 8.3 H4 M11 8.3 H12.5 M8.5 11 V13" stroke="#b04422" stroke-width="1.3"/></svg><div style="position:absolute;left:619px;top:342px;width:1px;height:22px;background:#48434a"></div><svg style="position:absolute;left:627px;top:344px" width="18" height="18" viewBox="0 0 18 18"><rect x="4.5" y="5" width="7" height="7" fill="#8e8e8e"/><rect x="7.5" y="8" width="6.5" height="6.5" fill="#8a7555" stroke="#1e1a1e" stroke-width="0.6"/><circle cx="3.5" cy="4" r="1.1" fill="#b04422"/><circle cx="14.5" cy="4" r="1.1" fill="#b04422"/><circle cx="3.5" cy="15.5" r="1.1" fill="#b04422"/><circle cx="14.5" cy="15.5" r="1.1" fill="#b04422"/></svg><svg style="position:absolute;left:651px;top:344px" width="18" height="18" viewBox="0 0 18 18"><rect x="4.5" y="5" width="7" height="7" fill="#8e8e8e"/><rect x="7.5" y="8" width="6.5" height="6.5" fill="#8a7555" stroke="#1e1a1e" stroke-width="0.6"/><circle cx="3.5" cy="4" r="1.1" fill="#b04422"/><circle cx="14.5" cy="4" r="1.1" fill="#b04422"/><circle cx="3.5" cy="15.5" r="1.1" fill="#b04422"/><circle cx="14.5" cy="15.5" r="1.1" fill="#b04422"/></svg>
<div style="position:absolute;left:289px;top:364px;width:543px;height:326px;background:#f6f6f6"></div>
<div style="position:absolute;left:289px;top:364px;width:541px;height:324px;background:#6c6c6c;border-top:1px solid #a4a4a4;border-left:1px solid #a4a4a4;box-sizing:border-box"></div>
<div style="position:absolute;left:291px;top:367px;width:538px;height:320px;background:#fcfcfc"></div>
<svg style="position:absolute;left:291px;top:367px;background:#fcfcfc" width="538" height="320"><path d="M8.87 0V320M17.33 0V320M25.80 0V320M34.27 0V320M42.73 0V320M51.20 0V320M59.67 0V320M68.14 0V320M76.60 0V320M85.07 0V320M93.54 0V320M102.00 0V320M110.47 0V320M118.94 0V320M127.41 0V320M135.87 0V320M144.34 0V320M152.81 0V320M161.27 0V320M169.74 0V320M178.21 0V320M186.67 0V320M195.14 0V320M203.61 0V320M212.08 0V320M220.54 0V320M229.01 0V320M237.48 0V320M245.94 0V320M254.41 0V320M262.88 0V320M271.34 0V320M279.81 0V320M288.28 0V320M296.75 0V320M305.21 0V320M313.68 0V320M322.15 0V320M330.61 0V320M339.08 0V320M347.55 0V320M356.01 0V320M364.48 0V320M372.95 0V320M381.42 0V320M389.88 0V320M398.35 0V320M406.82 0V320M415.28 0V320M423.75 0V320M432.22 0V320M440.68 0V320M449.15 0V320M457.62 0V320M466.08 0V320M474.55 0V320M483.02 0V320M491.49 0V320M499.95 0V320M508.42 0V320M516.89 0V320M525.35 0V320M533.82 0V320M0 8.47H538M0 16.93H538M0 25.40H538M0 33.87H538M0 42.34H538M0 50.80H538M0 59.27H538M0 67.74H538M0 76.20H538M0 84.67H538M0 93.14H538M0 101.60H538M0 110.07H538M0 118.54H538M0 127.01H538M0 135.47H538M0 143.94H538M0 152.41H538M0 160.87H538M0 169.34H538M0 177.81H538M0 186.27H538M0 194.74H538M0 203.21H538M0 211.68H538M0 220.14H538M0 228.61H538M0 237.08H538M0 245.54H538M0 254.01H538M0 262.48H538M0 270.94H538M0 279.41H538M0 287.88H538M0 296.35H538M0 304.81H538M0 313.28H538" stroke="#dcdcdc" stroke-width="1" fill="none"/></svg>
</body></html>
